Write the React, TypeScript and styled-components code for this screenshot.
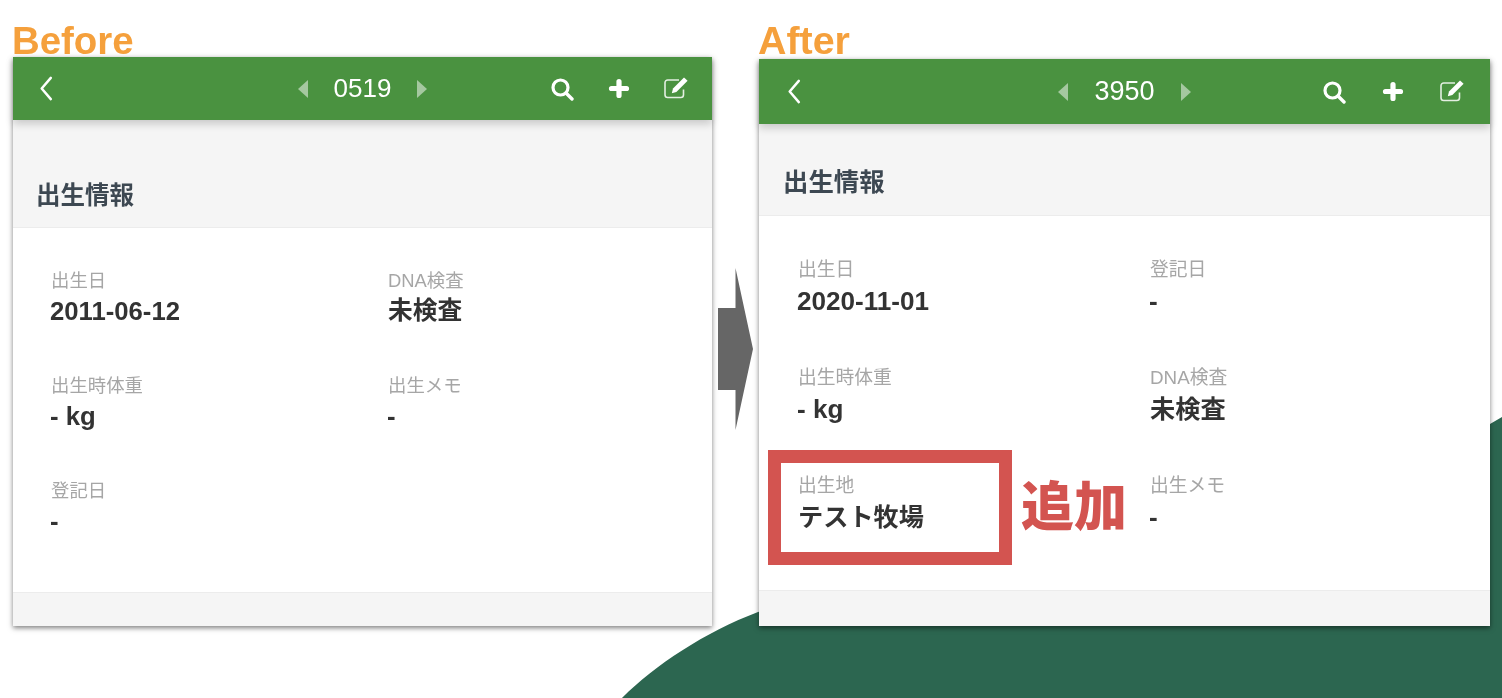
import * as React from 'react';
import styled, { createGlobalStyle } from 'styled-components';

const FONT = `"Liberation Sans", "Noto Sans CJK JP", sans-serif`;

const GlobalStyle = createGlobalStyle`
  html, body {
    margin: 0;
    padding: 0;
    background: #fff;
    font-family: ${FONT};
  }
`;

interface Field {
  label: string;
  value: string;
  cjk?: boolean;
  added?: boolean;
}

interface Metrics {
  columnWidth: number;
  captionSize: number;
  captionGap: number;
  headerHeight: number;
  headerPadding: number;
  numberSize: number;
  numberGap: number;
  actionGap: number;
  sectionHeight: number;
  titleSize: number;
  titleLeft: number;
  titleBottom: number;
  bodyHeight: number;
  bodyTop: number;
  bodyLeft: number;
  secondColumn: number;
  rowHeight: number;
  labelSize: number;
  valueGap: number;
  valueSize: number;
  cjkSize: number;
  footerHeight: number;
}

const BEFORE: Metrics = {
  columnWidth: 699,
  captionSize: 38.4,
  captionGap: 0,
  headerHeight: 63,
  headerPadding: 24,
  numberSize: 26,
  numberGap: 26,
  actionGap: 33,
  sectionHeight: 108,
  titleSize: 24.5,
  titleLeft: 23,
  titleBottom: 15,
  bodyHeight: 364,
  bodyTop: 41,
  bodyLeft: 38,
  secondColumn: 337,
  rowHeight: 105,
  labelSize: 18.4,
  valueGap: 1,
  valueSize: 25.7,
  cjkSize: 24.7,
  footerHeight: 34,
};

const AFTER: Metrics = {
  columnWidth: 731,
  captionSize: 39.4,
  captionGap: 2,
  headerHeight: 65,
  headerPadding: 26,
  numberSize: 27,
  numberGap: 26,
  actionGap: 35,
  sectionHeight: 92,
  titleSize: 25.4,
  titleLeft: 24,
  titleBottom: 17,
  bodyHeight: 374,
  bodyTop: 42,
  bodyLeft: 39,
  secondColumn: 352,
  rowHeight: 108,
  labelSize: 18.8,
  valueGap: 2,
  valueSize: 26.1,
  cjkSize: 25.2,
  footerHeight: 36,
};

const BEFORE_FIELDS: Field[] = [
  { label: '出生日', value: '2011-06-12' },
  { label: 'DNA検査', value: '未検査', cjk: true },
  { label: '出生時体重', value: '- kg' },
  { label: '出生メモ', value: '-' },
  { label: '登記日', value: '-' },
];

const AFTER_FIELDS: Field[] = [
  { label: '出生日', value: '2020-11-01' },
  { label: '登記日', value: '-' },
  { label: '出生時体重', value: '- kg' },
  { label: 'DNA検査', value: '未検査', cjk: true },
  { label: '出生地', value: 'テスト牧場', cjk: true, added: true },
  { label: '出生メモ', value: '-' },
];

const PhoneCard = ({ title, number, metrics, fields }: {
  title: string;
  number: string;
  metrics: Metrics;
  fields: Field[];
}) => (
  <Column $m={metrics}>
    <Caption $m={metrics}>{title}</Caption>
    <Card>
      <Header $m={metrics}>
        <HeaderSide>
          <BackIcon viewBox="0 0 14 26">
            <path d="M12 2 L2.5 13 L12 24" />
          </BackIcon>
        </HeaderSide>
        <Pager $m={metrics}>
          <Caret viewBox="0 0 10 18"><path d="M10 0 L0 9 L10 18 Z" /></Caret>
          <PagerNumber $m={metrics}>{number}</PagerNumber>
          <Caret viewBox="0 0 10 18"><path d="M0 0 L10 9 L0 18 Z" /></Caret>
        </Pager>
        <HeaderActions $m={metrics}>
          <ActionIcon viewBox="0 0 24 24">
            <circle cx="10.5" cy="10.5" r="7.5" fill="none" stroke="#fff" strokeWidth="3.2" />
            <path d="M16 16 L22 22" fill="none" stroke="#fff" strokeWidth="3.4" strokeLinecap="round" />
          </ActionIcon>
          <ActionIcon viewBox="0 0 24 24">
            <path d="M12 4.5 V18.5 M4.5 11.5 H19.5" fill="none" stroke="#fff" strokeWidth="5.2" strokeLinecap="round" />
          </ActionIcon>
          <ActionIcon viewBox="0 0 24 24">
            <path d="M19.5 12.5 V17.8 A2.7 2.7 0 0 1 16.8 20.5 H3.7 A2.7 2.7 0 0 1 1 17.8 V5.7 A2.7 2.7 0 0 1 3.7 3 H15" fill="none" stroke="#fff" strokeWidth="1.6" opacity="0.85" />
            <path d="M20 0.5 L23.6 3.8 L12.4 15 L7.8 16.2 L9 11.5 Z" fill="#fff" />
          </ActionIcon>
        </HeaderActions>
      </Header>
      <SectionHead $m={metrics}>
        <SectionTitle $m={metrics}>出生情報</SectionTitle>
      </SectionHead>
      <Body $m={metrics}>
        {fields.map(field => (
          <Cell key={field.label}>
            <FieldLabel $m={metrics}>{field.label}</FieldLabel>
            <FieldValue $m={metrics} $cjk={field.cjk}>{field.value}</FieldValue>
            {field.added && (
              <>
                <Highlight />
                <AddedNote>追加</AddedNote>
              </>
            )}
          </Cell>
        ))}
      </Body>
      <Footer $m={metrics} />
    </Card>
  </Column>
);

const App = () => (
  <>
    <GlobalStyle />
    <Slide>
      <Blob viewBox="0 0 1502 698" aria-hidden="true">
        <path d="M622 698 C 655 665, 705 632, 758 612 L 1490 424 L 1502 417 L 1502 698 Z" />
      </Blob>
      <PhoneCard title="Before" number="0519" metrics={BEFORE} fields={BEFORE_FIELDS} />
      <ArrowSlot>
        <Arrow viewBox="0 0 35 162">
          <path d="M0 40 H17.5 V0 L35 81 L17.5 162 V122 H0 Z" />
        </Arrow>
      </ArrowSlot>
      <PhoneCard title="After" number="3950" metrics={AFTER} fields={AFTER_FIELDS} />
    </Slide>
  </>
);

const Slide = styled.div`
  position: relative;
  width: 1502px;
  height: 698px;
  overflow: hidden;
  display: flex;
  align-items: flex-start;
  padding-left: 13px;
  box-sizing: border-box;
  background: #fff;
  filter: blur(0.4px);
`;

const Blob = styled.svg`
  position: absolute;
  left: 0;
  top: 0;
  width: 1502px;
  height: 698px;

  path {
    fill: #2c6650;
  }
`;

const Column = styled.section<{ $m: Metrics }>`
  position: relative;
  width: ${p => p.$m.columnWidth}px;
  padding-top: 22px;
  flex: none;
`;

const Caption = styled.div<{ $m: Metrics }>`
  height: 35px;
  margin-bottom: ${p => p.$m.captionGap}px;
  margin-left: -1px;
  font-size: ${p => p.$m.captionSize}px;
  line-height: 37px;
  font-weight: 700;
  color: #f5a03c;
`;

const Card = styled.div`
  background: #fff;
  box-shadow: 0 2px 5px rgba(0, 0, 0, 0.5);
`;

const Header = styled.header<{ $m: Metrics }>`
  position: relative;
  z-index: 1;
  height: ${p => p.$m.headerHeight}px;
  padding: 0 ${p => p.$m.headerPadding}px;
  box-sizing: border-box;
  display: flex;
  align-items: center;
  justify-content: space-between;
  background: #4a9240;
  box-shadow: 0 4px 8px rgba(0, 0, 0, 0.18);
`;

const HeaderSide = styled.div`
  width: 180px;
  display: flex;
  align-items: center;
`;

const BackIcon = styled.svg`
  width: 14px;
  height: 25px;
  margin-left: 2px;

  path {
    fill: none;
    stroke: #fff;
    stroke-width: 2.6;
    stroke-linecap: round;
    stroke-linejoin: round;
  }
`;

const Pager = styled.div<{ $m: Metrics }>`
  display: flex;
  align-items: center;
  gap: ${p => p.$m.numberGap}px;
`;

const Caret = styled.svg`
  width: 10px;
  height: 18px;

  path {
    fill: #a5c8a0;
  }
`;

const PagerNumber = styled.span<{ $m: Metrics }>`
  font-size: ${p => p.$m.numberSize}px;
  color: #fff;
`;

const HeaderActions = styled.div<{ $m: Metrics }>`
  width: 180px;
  display: flex;
  align-items: center;
  justify-content: flex-end;
  gap: ${p => p.$m.actionGap}px;
`;

const ActionIcon = styled.svg`
  width: 24px;
  height: 24px;
`;

const SectionHead = styled.div<{ $m: Metrics }>`
  height: ${p => p.$m.sectionHeight}px;
  box-sizing: border-box;
  padding: 0 25px ${p => p.$m.titleBottom}px ${p => p.$m.titleLeft}px;
  display: flex;
  align-items: flex-end;
  background: #f5f5f5;
  border-bottom: 1px solid #ececec;
`;

const SectionTitle = styled.h2<{ $m: Metrics }>`
  margin: 0;
  font-size: ${p => p.$m.titleSize}px;
  line-height: 32px;
  font-weight: 700;
  color: #3d4852;
`;

const Body = styled.div<{ $m: Metrics }>`
  height: ${p => p.$m.bodyHeight}px;
  box-sizing: border-box;
  padding: ${p => p.$m.bodyTop}px 0 0 ${p => p.$m.bodyLeft}px;
  display: grid;
  grid-template-columns: ${p => p.$m.secondColumn}px 1fr;
  grid-auto-rows: ${p => p.$m.rowHeight}px;
  background: #fff;
`;

const Cell = styled.div`
  position: relative;
`;

const FieldLabel = styled.div<{ $m: Metrics }>`
  font-size: ${p => p.$m.labelSize}px;
  line-height: 24px;
  color: #a6a6a6;
`;

const FieldValue = styled.div<{ $m: Metrics; $cjk?: boolean }>`
  margin-top: ${p => p.$m.valueGap}px;
  margin-left: ${p => (p.$cjk ? 0 : -1)}px;
  font-size: ${p => (p.$cjk ? p.$m.cjkSize : p.$m.valueSize)}px;
  line-height: 34px;
  font-weight: 700;
  color: #333;
`;

const Highlight = styled.div`
  position: absolute;
  left: -30px;
  top: -24px;
  width: 244px;
  height: 115px;
  box-sizing: border-box;
  border: 13px solid #d35450;
`;

const AddedNote = styled.div`
  position: absolute;
  left: 223px;
  top: 4px;
  font-size: 53px;
  line-height: 60px;
  font-weight: 900;
  color: #d35450;
  white-space: nowrap;
`;

const Footer = styled.div<{ $m: Metrics }>`
  height: ${p => p.$m.footerHeight}px;
  background: #f5f5f5;
  border-top: 1px solid #ececec;
  box-sizing: border-box;
`;

const ArrowSlot = styled.div`
  flex: none;
  width: 47px;
  padding: 268px 0 0 6px;
  box-sizing: border-box;
`;

const Arrow = styled.svg`
  display: block;
  width: 35px;
  height: 162px;

  path {
    fill: #666;
  }
`;

export default App;
